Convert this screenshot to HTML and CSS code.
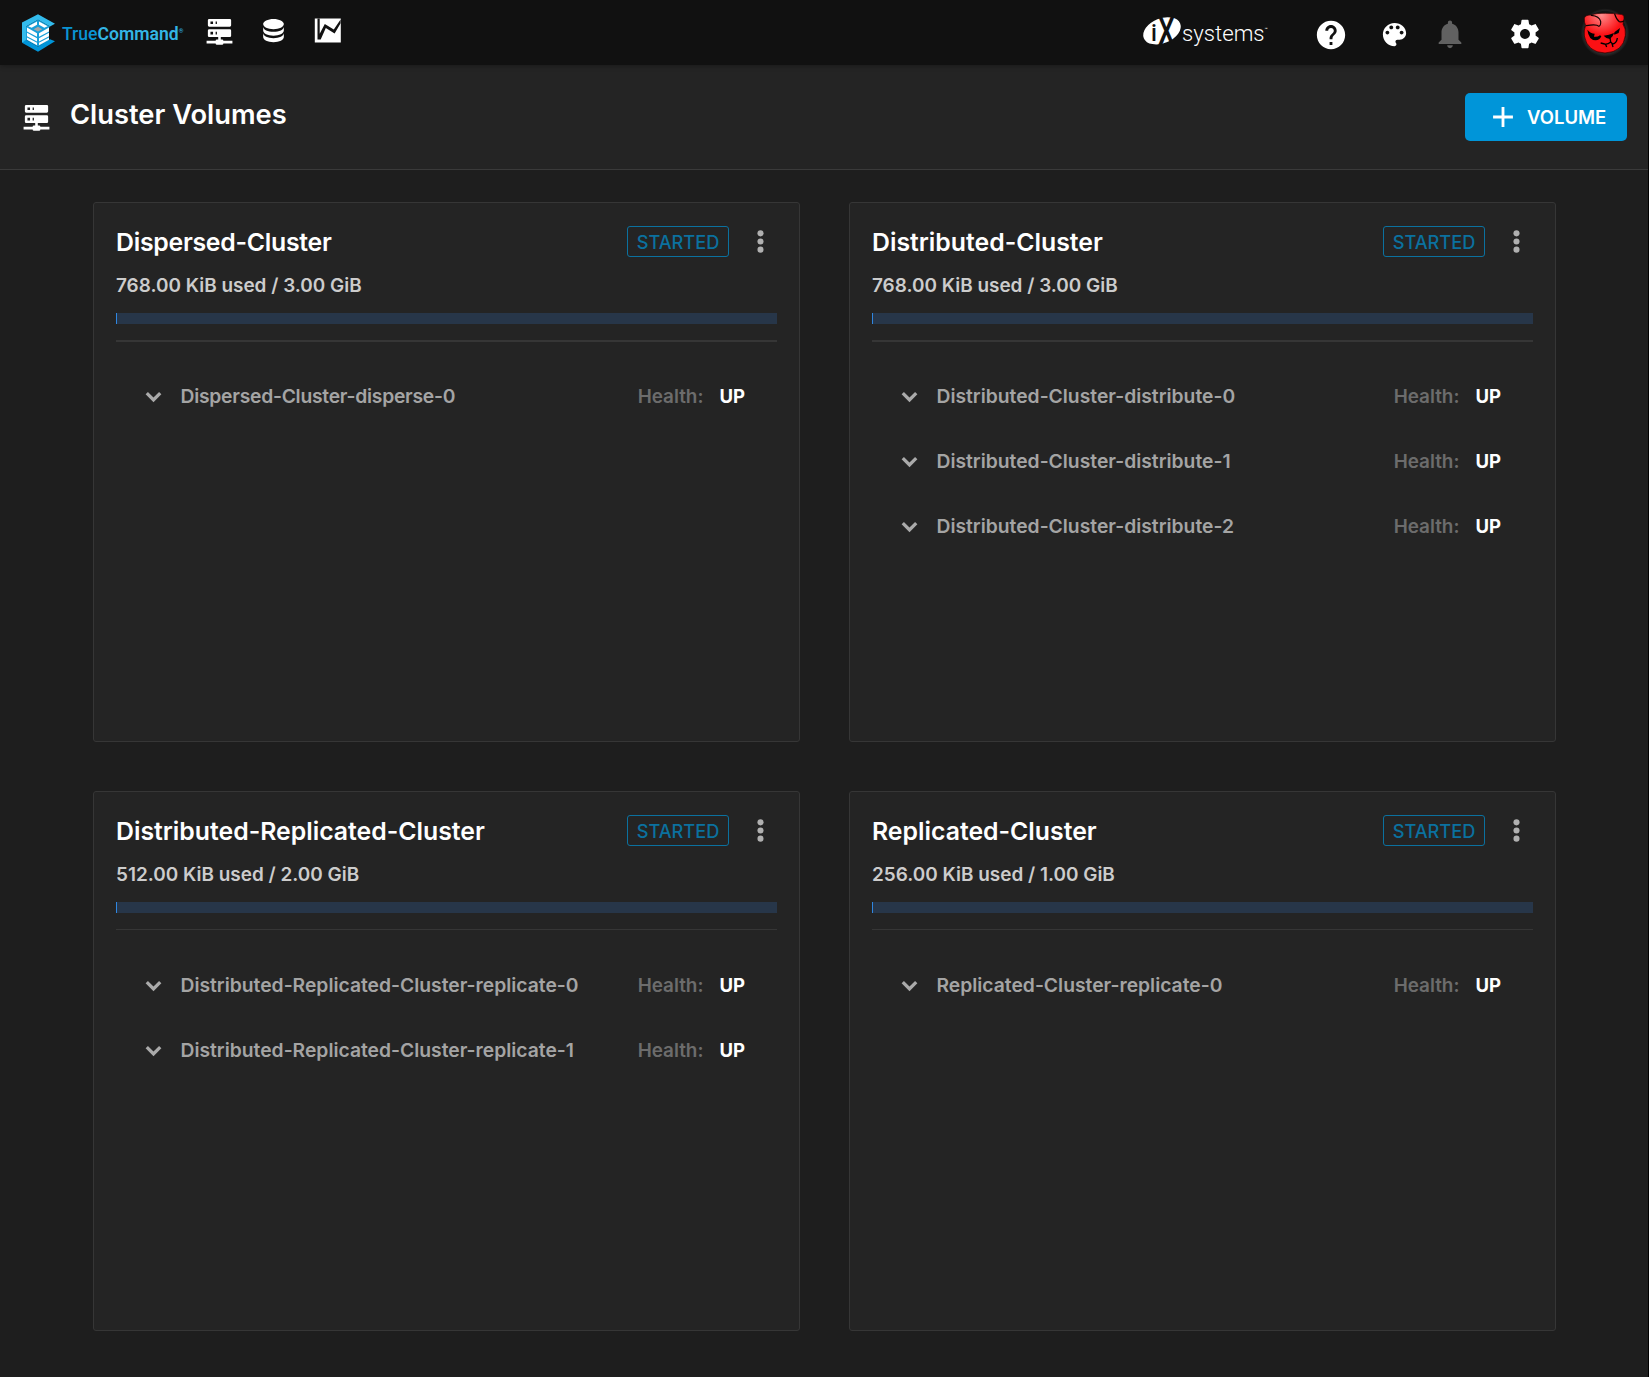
FILE: index.html
```html
<!DOCTYPE html>
<html lang="en">
<head>
<meta charset="utf-8">
<title>Cluster Volumes</title>
<link rel="stylesheet" href="styles.css">
</head>
<body>
<svg class="defs" aria-hidden="true">
  <symbol id="server" viewBox="0 0 24 24"><path d="M13,19H14A1,1 0 0,1 15,20H22V22H15A1,1 0 0,1 14,23H10A1,1 0 0,1 9,22H2V20H9A1,1 0 0,1 10,19H11V17H4A1,1 0 0,1 3,16V12A1,1 0 0,1 4,11H20A1,1 0 0,1 21,12V16A1,1 0 0,1 20,17H13V19M4,3H20A1,1 0 0,1 21,4V8A1,1 0 0,1 20,9H4A1,1 0 0,1 3,8V4A1,1 0 0,1 4,3M9,7H10V5H9V7M9,15H10V13H9V15M5,5V7H7V5H5M5,13V15H7V13H5Z"/></symbol>
  <symbol id="chevron" viewBox="0 0 24 24"><path d="M16.3 8.5 12 12.8 7.7 8.5 5.9 10.3l6.1 6.1 6.1-6.1z"/></symbol>
  <symbol id="dots" viewBox="0 0 24 24"><circle cx="12" cy="5.7" r="2.35"/><circle cx="12" cy="12" r="2.35"/><circle cx="12" cy="18.3" r="2.35"/></symbol>
</svg>

<header class="topbar">
  <a class="logo">
    <svg class="logo-mark" viewBox="12 17 99 113">
      <path fill="#33bbec" d="M12 42 60 17 111 46 96 54 60 34 24 54v46l-12 3z"/>
      <path fill="#0095d9" d="M12 103 24 94 60 115 96 92l15 6-51 32z"/>
      <path fill="#189fd9" d="M24 54 60 34l36 20-3 4v38l-33 19-36-21z"/>
      <path fill="#fff" d="M57 39v10L41 58l-10-5zM63 39v10l16 9 10-5z"/>
      <path fill="#a5a5a5" d="m60 55 13 7-13 7-13-7z"/>
      <path fill="#fff" d="m27 57 30 17v11L27 69zM27 73l30 16v10L27 83zM27 87l30 16v7L27 94zM93 57 63 74v11l30-16zM93 73 63 89v10l30-16zM93 87l-30 16v7l30-16z"/>
    </svg>
    <span class="wordmark"><span class="wordmark-a">True</span><b>Command</b><sup>®</sup></span>
  </a>
  <nav class="nav">
    <svg class="icon"><use href="#server"/></svg>
    <svg class="icon" viewBox="0 0 24 24"><path d="M12,3C7.58,3 4,4.79 4,7C4,9.21 7.58,11 12,11C16.42,11 20,9.21 20,7C20,4.79 16.42,3 12,3M4,9V12C4,14.21 7.58,16 12,16C16.42,16 20,14.21 20,12V9C20,11.21 16.42,13 12,13C7.58,13 4,11.21 4,9M4,14V17C4,19.21 7.58,21 12,21C16.42,21 20,19.21 20,17V14C20,16.21 16.42,18 12,18C7.58,18 4,16.21 4,14Z"/></svg>
    <svg class="icon" viewBox="0 0 31 31"><path d="M2.8 3.5h26v24h-26z"/><path class="ink" d="M5.5 3.5h2.2v15.2L12.8 9l9 5.6 6.8-10v3.6l-6 10.2-8.8-5.4-5.1 11.5H5.5z"/></svg>
  </nav>
  <div class="actions">
    <div class="ix">
      <svg class="ix-mark" viewBox="0 0 38 30">
        <ellipse cx="19" cy="14.8" rx="19.6" ry="12.4" transform="rotate(-22 19 14.8)"/>
        <text x="8" y="24.5" font-size="23" font-weight="500">i</text>
        <text transform="translate(14.8 28.5) scale(.7 1)" x="0" y="0" font-size="39">X</text>
      </svg>
      <span class="ix-text">systems</span><sup>™</sup>
    </div>
    <svg class="icon help" viewBox="0 0 24 24"><path d="M12 2C6.48 2 2 6.48 2 12s4.48 10 10 10 10-4.48 10-10S17.52 2 12 2zm1 17h-2v-2h2v2zm2.07-7.75l-.9.92C13.45 12.9 13 13.5 13 15h-2v-.5c0-1.1.45-2.1 1.17-2.83l1.24-1.26c.37-.36.59-.86.59-1.41 0-1.1-.9-2-2-2s-2 .9-2 2H8c0-2.21 1.79-4 4-4s4 1.79 4 4c0 .88-.36 1.68-.93 2.25z"/></svg>
    <svg class="icon palette" viewBox="0 0 24 24"><path d="M12 3c-4.97 0-9 4.03-9 9s4.03 9 9 9c.83 0 1.5-.67 1.5-1.5 0-.39-.15-.74-.39-1.01-.23-.26-.38-.61-.38-.99 0-.83.67-1.5 1.5-1.5H16c2.76 0 5-2.24 5-5 0-4.42-4.03-8-9-8zm-5.5 9c-.83 0-1.5-.67-1.5-1.5S5.67 9 6.5 9 8 9.67 8 10.5 7.33 12 6.5 12zm3-4C8.67 8 8 7.33 8 6.5S8.67 5 9.5 5s1.5.67 1.5 1.5S10.33 8 9.5 8zm5 0c-.83 0-1.5-.67-1.5-1.5S13.67 5 14.5 5s1.5.67 1.5 1.5S15.33 8 14.5 8zm3 4c-.83 0-1.5-.67-1.5-1.5S16.67 9 17.5 9s1.5.67 1.5 1.5-.67 1.5-1.5 1.5z"/></svg>
    <svg class="icon bell" viewBox="0 0 24 24"><path d="M12 22c1.1 0 2-.9 2-2h-4c0 1.1.89 2 2 2zm6-6v-5c0-3.07-1.64-5.64-4.5-6.32V4c0-.83-.67-1.5-1.5-1.5s-1.5.67-1.5 1.5v.68C7.63 5.36 6 7.92 6 11v5l-2 2v1h16v-1l-2-2z"/></svg>
    <svg class="icon gear" viewBox="0 0 24 24"><path d="M19.43 12.98c.04-.32.07-.64.07-.98s-.03-.66-.07-.98l2.11-1.65c.19-.15.24-.42.12-.64l-2-3.46c-.12-.22-.39-.3-.61-.22l-2.49 1c-.52-.4-1.08-.73-1.69-.98l-.38-2.65C14.46 2.18 14.25 2 14 2h-4c-.25 0-.46.18-.49.42l-.38 2.65c-.61.25-1.17.59-1.69.98l-2.49-1c-.23-.09-.49 0-.61.22l-2 3.46c-.13.22-.07.49.12.64l2.11 1.65c-.04.32-.07.65-.07.98s.03.66.07.98l-2.11 1.65c-.19.15-.24.42-.12.64l2 3.46c.12.22.39.3.61.22l2.49-1c.52.4 1.08.73 1.69.98l.38 2.65c.03.24.24.42.49.42h4c.25 0 .46-.18.49-.42l.38-2.65c.61-.25 1.17-.59 1.69-.98l2.49 1c.23.09.49 0 .61-.22l2-3.46c.12-.22.07-.49-.12-.64l-2.11-1.65zM12 15.5c-1.93 0-3.5-1.57-3.5-3.5s1.57-3.5 3.5-3.5 3.5 1.57 3.5 3.5-1.57 3.5-3.5 3.5z"/></svg>
    <svg class="avatar" viewBox="60 5 150 150">
      <defs>
        <radialGradient id="glow"><stop offset=".8" stop-color="#3a3a3a"/><stop offset="1" stop-color="#111"/></radialGradient>
        <radialGradient id="shine" cx=".42" cy=".05" r=".5"><stop offset="0" stop-color="#ff8c8c"/><stop offset="1" stop-color="#fb1014"/></radialGradient>
      </defs>
      <circle cx="135" cy="82" r="73" fill="url(#glow)"/>
      <circle cx="135" cy="80" r="64" fill="#151515"/>
      <path fill="url(#shine)" stroke="#300" stroke-width="2" d="M73 38q4-10 22-9 12-6 42-5 28 0 42 3 14-1 13 12l-3 18q9 12 7 33-6 50-61 53-53-2-62-51-2-20 4-31-5-10-4-23z"/>
      <g fill="none" stroke="#100" stroke-width="3.5" stroke-linecap="round"><path d="M94 30q24 2 28 18 1 12-5 15-8-8-38-2M164 26q5 16 14 23 8 2 13-2"/></g>
      <path d="M82 73q10 12 22 12l-2 9q10 2 18-4l4 3q-5 12-17 12-21-1-25-32zM180 68l-4 15-13 5q-2-4 1-8zM131 91q16-1 31-8-2 10-12 18-12-1-19-10z"/>
      <path fill="none" stroke="#000" stroke-width="4" d="m150 98 2 12q-9 8-18 6l-12-3m30-3 6 6q12-2 14-18m-36 17 4 10m16-10 3 10"/>
    </svg>
  </div>
</header>

<section class="toolbar">
  <svg class="icon"><use href="#server"/></svg>
  <h1>Cluster Volumes</h1>
  <button class="add"><svg class="icon" viewBox="0 0 24 24"><path d="M19 13h-6v6h-2v-6H5v-2h6V5h2v6h6z"/></svg><span>VOLUME</span></button>
</section>

<main class="volumes">
  <article class="card dispersed">
    <div class="card-head"><h2>Dispersed-Cluster</h2><span class="tag">STARTED</span><svg class="menu"><use href="#dots"/></svg></div>
    <p class="usage">768.00 KiB used / 3.00 GiB</p>
    <div class="bar"><i></i></div>
    <ul>
      <li><svg class="chev"><use href="#chevron"/></svg><span class="name">Dispersed-Cluster-disperse-0</span><span class="label">Health:</span><b>UP</b></li>
    </ul>
  </article>
  <article class="card">
    <div class="card-head"><h2>Distributed-Cluster</h2><span class="tag">STARTED</span><svg class="menu"><use href="#dots"/></svg></div>
    <p class="usage">768.00 KiB used / 3.00 GiB</p>
    <div class="bar"><i></i></div>
    <ul>
      <li><svg class="chev"><use href="#chevron"/></svg><span class="name">Distributed-Cluster-distribute-0</span><span class="label">Health:</span><b>UP</b></li>
      <li><svg class="chev"><use href="#chevron"/></svg><span class="name">Distributed-Cluster-distribute-1</span><span class="label">Health:</span><b>UP</b></li>
      <li><svg class="chev"><use href="#chevron"/></svg><span class="name">Distributed-Cluster-distribute-2</span><span class="label">Health:</span><b>UP</b></li>
    </ul>
  </article>
  <article class="card thin">
    <div class="card-head"><h2>Distributed-Replicated-Cluster</h2><span class="tag">STARTED</span><svg class="menu"><use href="#dots"/></svg></div>
    <p class="usage">512.00 KiB used / 2.00 GiB</p>
    <div class="bar"><i></i></div>
    <ul>
      <li><svg class="chev"><use href="#chevron"/></svg><span class="name">Distributed-Replicated-Cluster-replicate-0</span><span class="label">Health:</span><b>UP</b></li>
      <li><svg class="chev"><use href="#chevron"/></svg><span class="name">Distributed-Replicated-Cluster-replicate-1</span><span class="label">Health:</span><b>UP</b></li>
    </ul>
  </article>
  <article class="card thin">
    <div class="card-head"><h2>Replicated-Cluster</h2><span class="tag">STARTED</span><svg class="menu"><use href="#dots"/></svg></div>
    <p class="usage">256.00 KiB used / 1.00 GiB</p>
    <div class="bar"><i></i></div>
    <ul>
      <li><svg class="chev"><use href="#chevron"/></svg><span class="name">Replicated-Cluster-replicate-0</span><span class="label">Health:</span><b>UP</b></li>
    </ul>
  </article>
</main>
</body>
</html>
```
FILE: styles.css
```css
* { box-sizing: border-box; }
html { background: #1e1e1e; }
body {
  margin: 0;
  height: 1377px;
  border-right: 1px solid #000;
  background: #1e1e1e;
  color: #fff;
  font-family: Inter, "Work Sans", sans-serif;
  font-weight: 500;
  overflow: hidden;
}
h1, h2, p, ul { margin: 0; padding: 0; }
.defs { display: none; }
.icon { width: 31px; height: 31px; fill: #fff; flex: none; display: block; }

/* top bar */
.topbar {
  position: relative;
  display: flex;
  height: 65px;
  padding: 0 18px 0 22px;
  background: #111;
  box-shadow: 0 1px 5px rgba(0, 0, 0, .3);
}
.logo { display: flex; width: 182px; font-family: Roboto, sans-serif; }
.logo-mark { width: 33px; height: 38px; margin-top: 13.5px; }
.wordmark {
  margin: 24px 0 0 7px;
  font-size: 17.6px;
  line-height: 21px;
  color: #33b5e5;
  white-space: nowrap;
}
.wordmark-a { color: #0a93d3; }
.wordmark b { font-weight: 600; }
.wordmark sup { font-size: 6px; line-height: 0; vertical-align: 7px; }
.nav { display: flex; gap: 23px; margin-top: 14.5px; }
.nav .ink { fill: #111; }
.actions { display: flex; align-items: flex-start; margin-left: auto; }
.ix { display: flex; width: 125px; font-family: Roboto, sans-serif; }
.ix-mark { width: 38px; height: 30px; margin-top: 16px; fill: #fff; flex: none; overflow: visible; }
.ix-mark text { fill: #111; }
.ix-text { margin: 19px 0 0 1px; font-size: 22.2px; line-height: 28px; font-weight: 300; }
.ix sup { margin-top: 26px; font-size: 5px; line-height: 6px; }
.help { width: 34px; height: 34px; margin: 18px 0 0 46px; }
.palette { margin: 18.5px 0 0 31px; }
.bell { width: 34px; height: 34px; margin: 17px 0 0 22.5px; fill: #616161; }
.gear { width: 34px; height: 34px; margin: 17px 0 0 41.5px; }
.avatar { width: 50px; height: 50px; margin: 6.7px 0 0 38px; }

/* page title */
.toolbar {
  display: flex;
  align-items: flex-start;
  height: 105px;
  padding: 0 21px;
  border-bottom: 1px solid #3a3a3a;
  background: #242424;
}
.toolbar > .icon { margin-top: 36px; }
h1 { margin: 32px 0 0 18px; font-size: 27.3px; line-height: 35px; font-weight: 600; }
.add {
  display: flex;
  align-items: center;
  width: 162px;
  height: 48px;
  margin: 28px 0 0 auto;
  padding: 0 0 0 21px;
  border: 0;
  border-radius: 5px;
  background: #0095d9;
  color: #fff;
  font: 600 18.5px/24px Inter, sans-serif;
}
.add .icon { width: 34px; height: 34px; }
.add span { margin-left: 7px; }

/* volume cards */
.volumes {
  display: grid;
  grid-template-columns: 707px 707px;
  grid-auto-rows: 540px;
  gap: 49px;
  padding: 32px 0 0 93px;
}
.card {
  padding: 23px 22px;
  border: 1px solid #363636;
  border-radius: 3px;
  background: #242424;
}
.card-head { display: flex; align-items: center; height: 31px; }
h2 { flex: 1; font-size: 24.8px; line-height: 30px; font-weight: 600; white-space: nowrap; }
.dispersed h2 { letter-spacing: -.25px; }
.dispersed .name { letter-spacing: -.25px; }
.tag {
  width: 102px;
  height: 31px;
  border: 1px solid #0b719f;
  border-radius: 3px;
  color: #0b719f;
  font-size: 18.2px;
  line-height: 30px;
  text-align: center;
}
.menu { width: 31px; height: 31px; margin: -1px 1px 0 16px; fill: #b0b0b0; }
.usage { margin: 17px 0 15px; font-size: 18.95px; line-height: 24px; font-weight: 600; color: #ccc; }
.bar { height: 11px; background: #273649; }
.bar i { display: block; width: 1px; height: 100%; background: #2f86e0; }
.card ul {
  margin-top: 16px;
  padding: 21px 32px 0 22px;
  border-top: 2px solid #363636;
  list-style: none;
}
.thin ul { border-top-width: 1px; padding-top: 22px; }
.card li { display: flex; align-items: center; height: 65px; font-size: 19.3px; }
.chev { width: 31px; height: 31px; margin-top: 1px; fill: #aaa; flex: none; }
.name { flex: 1; margin-left: 11.5px; font-weight: 600; color: #a4a4a4; white-space: nowrap; }
.label { margin: 1px 16px 0 0; font-size: 18.9px; font-weight: 600; color: #6c6c6c; }
.card li b { margin: 1px 0 0; font-size: 18.5px; font-weight: 700; }
```
